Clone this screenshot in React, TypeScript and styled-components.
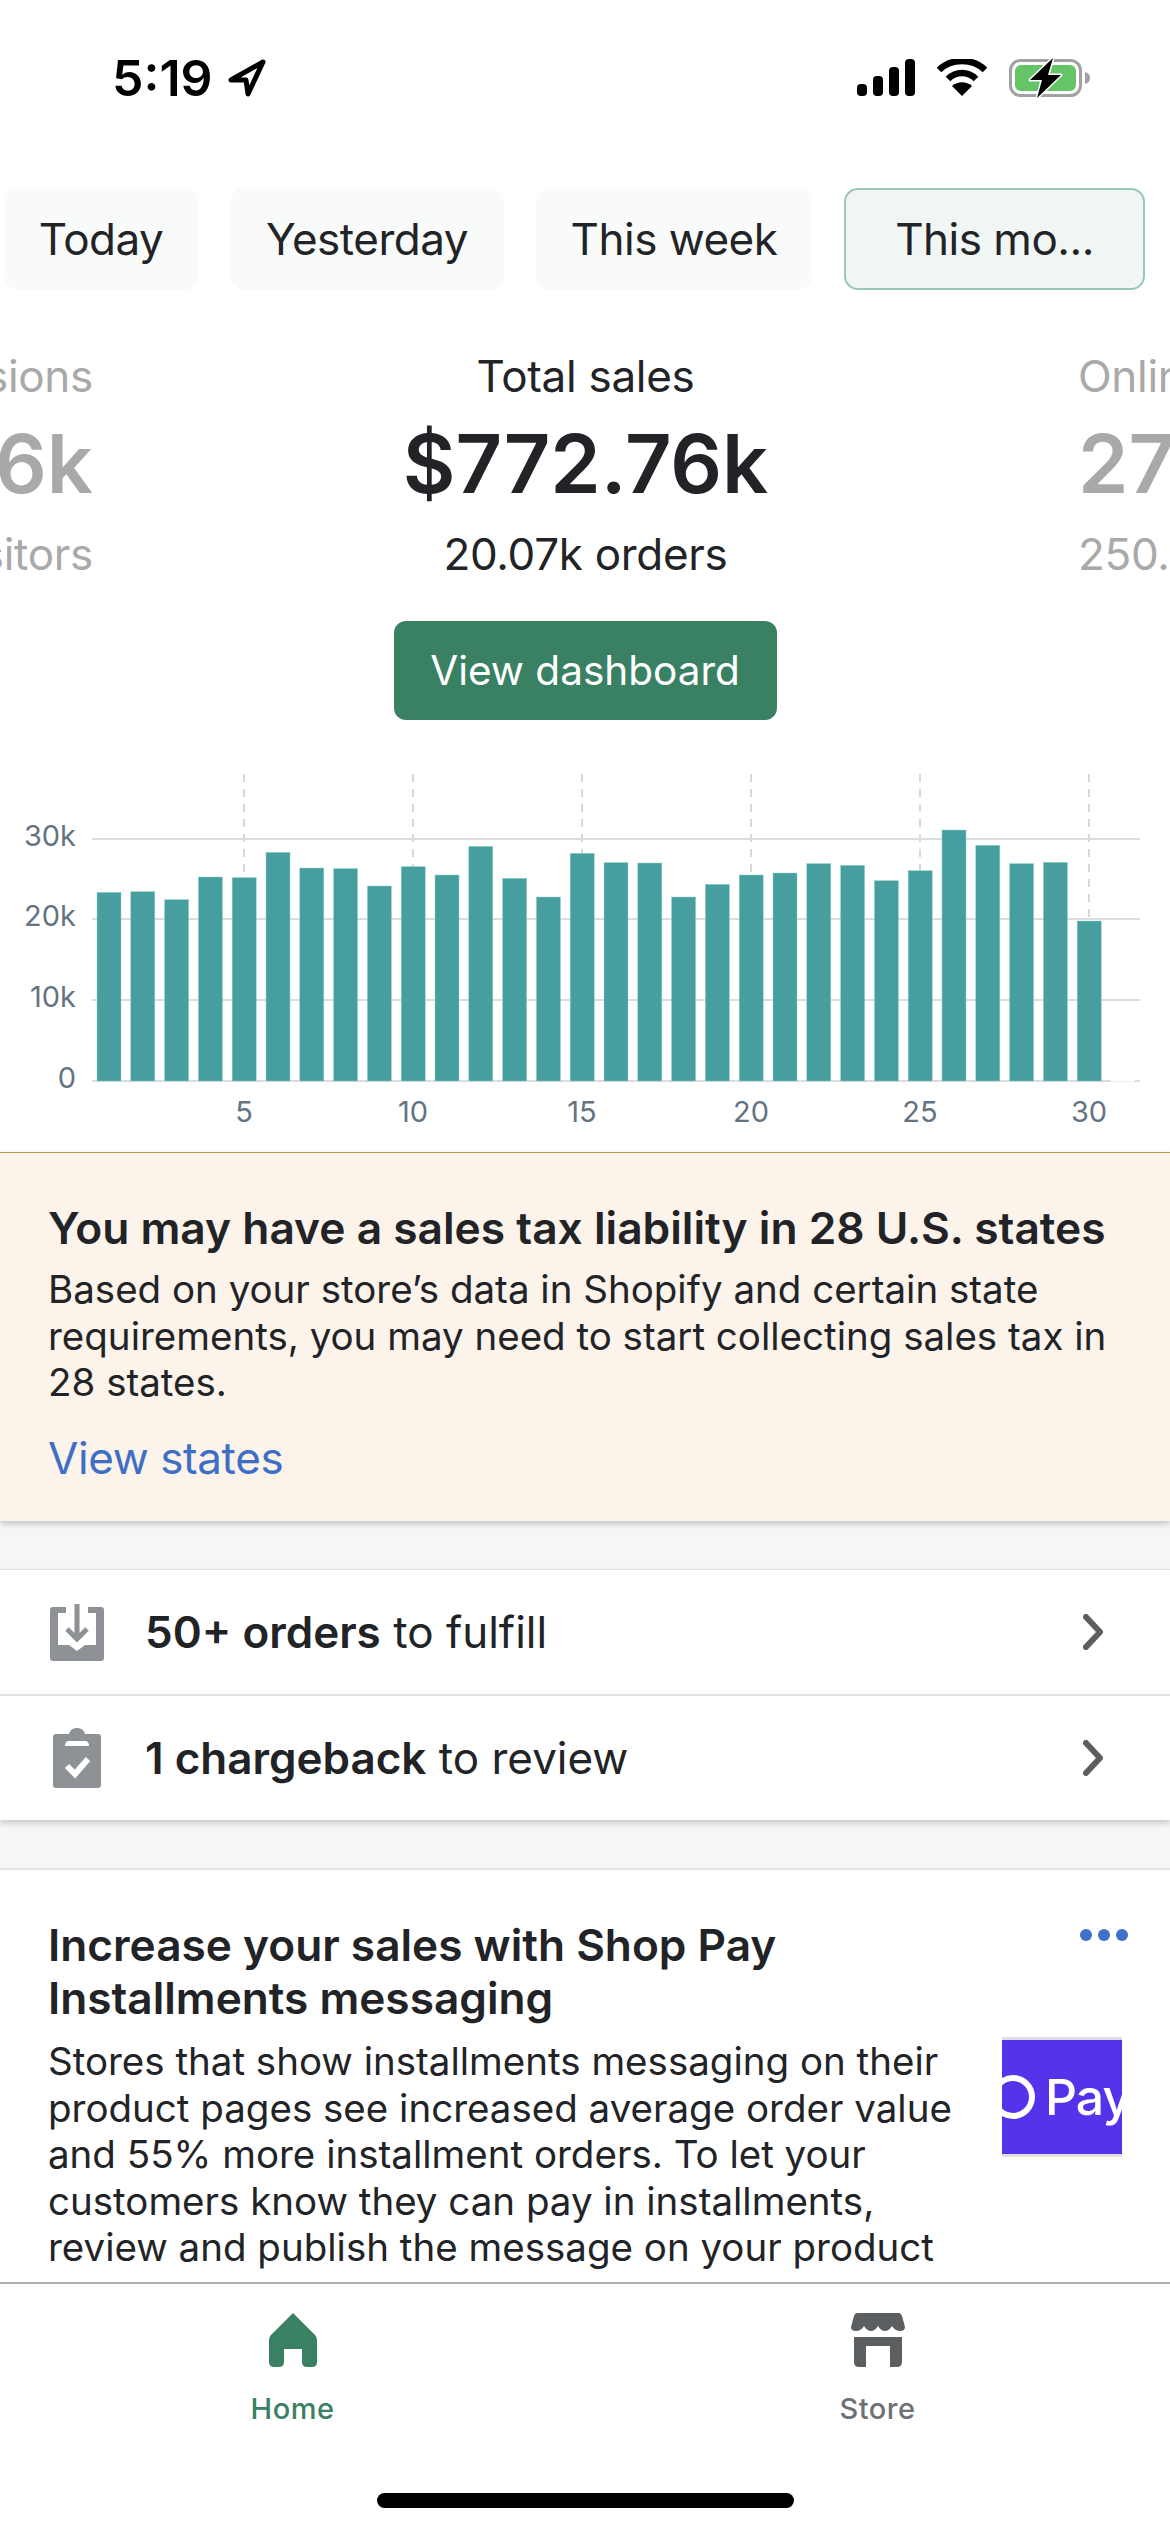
import styled, { createGlobalStyle } from "styled-components";

const GlobalStyle = createGlobalStyle`
	html, body {
		margin: 0;
		padding: 0;
		background: #fff;
	}
	body {
		font-family: Inter, "Liberation Sans", sans-serif;
		color: #212326;
	}
`;

const barTops = [
	427, 425, 449, 381, 383, 307, 354, 356, 408, 350, 375, 289, 385, 441, 310, 338, 339, 441, 403, 375, 369, 341, 346,
	392, 362, 240, 286, 341, 337, 513,
];

const App = () => {
	return (
		<Screen>
			<GlobalStyle />
			<StatusBar>
				<Clock>
					5:19
					<svg width="38" height="38" viewBox="0 0 38 38">
						<path d="M35 3 L3 21 L18 21 L20 35 Z" fill="none" stroke="#000" strokeWidth="5" strokeLinejoin="round" />
					</svg>
				</Clock>
				<StatusIcons>
					<svg width="58" height="38" viewBox="0 0 58 38">
						<rect x="0" y="25" width="10" height="12" rx="4" />
						<rect x="16" y="17" width="10" height="20" rx="4" />
						<rect x="32" y="8" width="10" height="29" rx="4" />
						<rect x="48" y="0" width="10" height="37" rx="4" />
					</svg>
					<svg width="50" height="38" viewBox="0 0 50 38">
						<path d="M2 11 C14 -1 36 -1 48 11" fill="none" stroke="#000" strokeWidth="6.5" />
						<path d="M11 20 C19 12 31 12 39 20" fill="none" stroke="#000" strokeWidth="6.5" />
						<path d="M25 37 L15 27 C21 22 29 22 35 27 Z" />
					</svg>
					<svg width="82" height="40" viewBox="0 0 82 40">
						<rect x="1.5" y="2.5" width="70" height="35" rx="10" fill="none" stroke="#a2a2a2" strokeWidth="3" />
						<rect x="6" y="7" width="61" height="26" rx="6" fill="#65c466" />
						<path d="M76 14 C80 15 81 18 81 20 C81 22 80 25 76 26 Z" fill="#a2a2a2" />
						<path
							d="M44 0 L21 22 L33 22 L28 40 L52 17 L39 17 Z"
							fill="#000"
							stroke="#fff"
							strokeWidth="3"
							strokeLinejoin="round"
							paintOrder="stroke"
						/>
					</svg>
				</StatusIcons>
			</StatusBar>

			<Tabs>
				<Tab $width={194}>Today</Tab>
				<Tab $width={274}>Yesterday</Tab>
				<Tab $width={276}>This week</Tab>
				<Tab $width={301} $active>
					This mo...
				</Tab>
			</Tabs>

			<Stats>
				<SideStat $align="right">
					<StatLabel>Sessions</StatLabel>
					<StatValue>306k</StatValue>
					<StatLabel>visitors</StatLabel>
				</SideStat>
				<MainStat>
					<StatLabel>Total sales</StatLabel>
					<StatValue>$772.76k</StatValue>
					<StatLabel>20.07k orders</StatLabel>
				</MainStat>
				<SideStat $align="left">
					<StatLabel>Online</StatLabel>
					<StatValue>27.5k</StatValue>
					<StatLabel>250.6k</StatLabel>
				</SideStat>
			</Stats>

			<DashboardButton>View dashboard</DashboardButton>

			<ChartWrap>
				<svg width="1170" height="370" viewBox="0 770 1170 370">
					{[244, 413, 582, 751, 920, 1089].map((x) => (
						<line key={x} x1={x} x2={x} y1="774" y2="1081" stroke="#d8d8da" strokeWidth="2" strokeDasharray="8 7" />
					))}
					{[839, 919, 1000].map((y) => (
						<line key={y} x1="92" x2="1140" y1={y} y2={y} stroke="#dcdcdf" strokeWidth="2" />
					))}
					<line x1="92" x2="1111" y1="1081" y2="1081" stroke="#dcdcdf" strokeWidth="2" />
					<line x1="1111" x2="1135" y1="1081.5" y2="1081.5" stroke="#eeeef0" strokeWidth="1" />
					<line x1="1135" x2="1140" y1="1081" y2="1081" stroke="#dcdcdf" strokeWidth="2" />
					{barTops.map((top, i) => {
						const y = 750 + top / 3;
						return (
							<rect
								key={i}
								x={97 + i * 33.8}
								y={y}
								width="24"
								height={1081 - y}
								fill="#479e9e"
								stroke="#8fcfca"
								strokeWidth="0.5"
							/>
						);
					})}
					<g fill="#637381" fontFamily="Inter, sans-serif" fontSize="29">
						{[
							["30k", 846],
							["20k", 926],
							["10k", 1007],
							["0", 1088],
						].map(([label, y]) => (
							<text key={label} x="76" y={y} textAnchor="end">
								{label}
							</text>
						))}
						{[5, 10, 15, 20, 25, 30].map((n, i) => (
							<text key={n} x={244 + i * 169} y="1122" textAnchor="middle">
								{n}
							</text>
						))}
					</g>
				</svg>
			</ChartWrap>

			<Banner>
				<BannerTitle>You may have a sales tax liability in 28 U.S. states</BannerTitle>
				<BodyText>
					Based on your store’s data in Shopify and certain state requirements, you may need to start collecting sales
					tax in 28 states.
				</BodyText>
				<BannerLink>View states</BannerLink>
			</Banner>

			<Gap />

			<TaskList>
				<TaskRow>
					<TaskIcon>
						<svg width="54" height="58" viewBox="0 0 54 58">
							<path
								d="M3 4 H16 V10 H8 V42 H19 L27 48 L35 42 H46 V10 H38 V4 H51 A3 3 0 0 1 54 7 V55 A3 3 0 0 1 51 58 H3 A3 3 0 0 1 0 55 V7 A3 3 0 0 1 3 4 Z"
								fill="#8e9196"
							/>
							<path d="M27 1 V36 M17 26 L27 36 L37 26" fill="none" stroke="#8e9196" strokeWidth="5" />
						</svg>
					</TaskIcon>
					<TaskText>
						<strong>50+ orders</strong> to fulfill
					</TaskText>
					<Chevron />
				</TaskRow>
				<TaskRow>
					<TaskIcon>
						<svg width="48" height="60" viewBox="0 0 48 60">
							<path
								d="M3 6 H16 C17 2 20 0 24 0 C28 0 31 2 32 6 H45 A3 3 0 0 1 48 9 V57 A3 3 0 0 1 45 60 H3 A3 3 0 0 1 0 57 V9 A3 3 0 0 1 3 6 Z"
								fill="#8e9196"
							/>
							<path d="M12 18 C12 14 14 13 16 13 H32 C34 13 36 14 36 18 Z" fill="#fff" />
							<path d="M14 38 L22 46 L35 31" fill="none" stroke="#fff" strokeWidth="6" />
						</svg>
					</TaskIcon>
					<TaskText>
						<strong>1 chargeback</strong> to review
					</TaskText>
					<Chevron />
				</TaskRow>
			</TaskList>

			<Gap />

			<Card>
				<CardHeader>
					<CardTitle>Increase your sales with Shop Pay Installments messaging</CardTitle>
					<MoreDots>
						<span />
						<span />
						<span />
					</MoreDots>
				</CardHeader>
				<CardBody>
					<BodyText>
						Stores that show installments messaging on their product pages see increased average order value and 55%
						more installment orders. To let your customers know they can pay in installments, review and publish the
						message on your product
					</BodyText>
					<ShopPayThumb>
						<svg width="43" height="60" viewBox="0 0 43 60">
							<circle cx="11" cy="30" r="19" fill="none" stroke="#fff" strokeWidth="6" />
							<circle cx="2" cy="26" r="4" fill="#5433eb" />
						</svg>
						<ThumbWord>Pay</ThumbWord>
					</ShopPayThumb>
				</CardBody>
			</Card>

			<BottomNav>
				<NavItem $active>
					<svg width="48" height="54" viewBox="0 0 48 54">
						<path
							d="M24 0 L46 22 Q48 24 48 27 V49 Q48 54 43 54 H38 Q33 54 33 49 V36 H15 V49 Q15 54 10 54 H5 Q0 54 0 49 V27 Q0 24 2 22 Z"
							fill="#3a8063"
						/>
					</svg>
					Home
				</NavItem>
				<NavItem>
					<svg width="54" height="54" viewBox="0 0 54 54">
						<path
							d="M6 0 H48 Q50 0 51 3 L54 14 Q54 18 49 18 Q44 18 41 13 Q38 18 34 18 Q30 18 27 13 Q24 18 20 18 Q16 18 13 13 Q10 18 5 18 Q0 18 0 14 L3 3 Q4 0 6 0 Z"
							fill="#5c5f62"
						/>
						<path d="M3 24 H51 V49 Q51 54 46 54 H39 V33 H15 V54 H8 Q3 54 3 49 Z" fill="#5c5f62" />
					</svg>
					Store
				</NavItem>
			</BottomNav>
			<HomeIndicator />
		</Screen>
	);
};

const Chevron = () => (
	<ChevronBox>
		<svg width="20" height="36" viewBox="0 0 20 36">
			<path d="M3 3 L17 18 L3 33" fill="none" stroke="#5c5f62" strokeWidth="6" strokeLinecap="round" strokeLinejoin="round" />
		</svg>
	</ChevronBox>
);

const Screen = styled.div`
	width: 1170px;
	height: 2532px;
	overflow: hidden;
	display: flex;
	flex-direction: column;
	background: #fff;
	position: relative;
`;

const StatusBar = styled.div`
	height: 188px;
	flex: none;
	display: flex;
	justify-content: space-between;
	align-items: flex-start;
	padding: 58px 79px 0 112px;
	box-sizing: border-box;
`;

const Clock = styled.div`
	display: flex;
	align-items: center;
	gap: 15px;
	font-size: 50px;
	font-weight: 600;
	line-height: 40px;
	color: #000;
`;

const StatusIcons = styled.div`
	display: flex;
	align-items: center;
	gap: 22px;
`;

const Tabs = styled.div`
	display: flex;
	gap: 32px;
	padding-left: 4px;
	flex: none;
`;

const Tab = styled.div<{ $active?: boolean; $width: number }>`
	width: ${(p) => p.$width}px;
	height: 102px;
	box-sizing: border-box;
	display: flex;
	align-items: center;
	justify-content: center;
	font-size: 44px;
	letter-spacing: -0.5px;
	white-space: nowrap;
	color: #212326;
	border-radius: 14px;
	background: ${(p) => (p.$active ? "#f1f5f4" : "#f9fbfa")};
	border: ${(p) => (p.$active ? "2px solid #9ac8b2" : "none")};
	flex: none;
`;

const Stats = styled.div`
	display: grid;
	grid-template-columns: 93px 1fr 92px;
	margin-top: 60px;
	overflow: hidden;
	flex: none;
`;

const MainStat = styled.div`
	display: flex;
	flex-direction: column;
	align-items: center;
	color: #212326;
`;

const SideStat = styled.div<{ $align: "left" | "right" }>`
	display: flex;
	flex-direction: column;
	align-items: ${(p) => (p.$align === "right" ? "flex-end" : "flex-start")};
	color: #a9a9a9;
`;

const StatLabel = styled.div`
	font-size: 44px;
	line-height: 52px;
	letter-spacing: -0.3px;
	white-space: nowrap;
	flex: none;
`;

const StatValue = styled.div`
	font-size: 81px;
	font-weight: 600;
	line-height: 96px;
	margin: 14px 0 16px;
	white-space: nowrap;
	flex: none;
`;

const DashboardButton = styled.div`
	width: 383px;
	height: 99px;
	margin: 41px auto 0;
	flex: none;
	display: flex;
	align-items: center;
	justify-content: center;
	background: #3a8063;
	color: #fff;
	border-radius: 12px;
	font-size: 40.5px;
`;

const ChartWrap = styled.div`
	margin-top: 50px;
	height: 382px;
	flex: none;
`;

const Banner = styled.div`
	flex: none;
	height: 369px;
	box-sizing: border-box;
	padding: 49px 48px 0;
	background: #fcf3ea;
	border-top: 1px solid #b8974a;
	box-shadow: 0 3px 6px rgba(0, 0, 0, 0.2);
	position: relative;
`;

const BannerTitle = styled.div`
	font-size: 44.3px;
	font-weight: 600;
	line-height: 52px;
	margin-bottom: 12px;
	white-space: nowrap;
`;

const BodyText = styled.div`
	font-size: 38.5px;
	line-height: 46.5px;
	color: #212326;
`;

const BannerLink = styled.div`
	margin-top: 26px;
	font-size: 44px;
	line-height: 52px;
	letter-spacing: -0.4px;
	color: #3f6fc4;
`;

const Gap = styled.div`
	height: 48px;
	flex: none;
	background: #f6f6f7;
`;

const TaskList = styled.div`
	flex: none;
	border-top: 1px solid #e3e3e4;
	background: #fff;
	box-shadow: 0 3px 6px rgba(0, 0, 0, 0.2);
	position: relative;
`;

const TaskRow = styled.div`
	height: 124px;
	display: flex;
	align-items: center;
	padding: 0 67px 0 50px;
	& + & {
		border-top: 2px solid #e3e3e4;
	}
`;

const TaskIcon = styled.div`
	width: 54px;
	display: flex;
	justify-content: center;
	flex: none;
`;

const TaskText = styled.div`
	margin-left: 41px;
	flex: 1;
	font-size: 44px;
	color: #212326;
	strong {
		font-weight: 600;
	}
`;

const ChevronBox = styled.div`
	display: flex;
`;

const Card = styled.div`
	flex: 1;
	min-height: 0;
	overflow: hidden;
	border-top: 2px solid #e3e3e4;
	padding: 49px 48px 0;
	background: #fff;
`;

const CardHeader = styled.div`
	display: flex;
	justify-content: space-between;
	align-items: flex-start;
`;

const CardTitle = styled.div`
	width: 860px;
	font-size: 44.2px;
	font-weight: 600;
	line-height: 53px;
`;

const MoreDots = styled.div`
	display: flex;
	gap: 6px;
	margin: 10px -6px 0 0;
	span {
		width: 12px;
		height: 12px;
		border-radius: 50%;
		background: #4070c8;
	}
`;

const CardBody = styled.div`
	display: grid;
	grid-template-columns: 930px 120px;
	gap: 24px;
	margin-top: 13px;
`;

const ShopPayThumb = styled.div`
	width: 120px;
	height: 120px;
	margin-top: -1px;
	box-sizing: border-box;
	background: #5433eb;
	border-top: 3px solid #dcdfe4;
	border-bottom: 3px solid #dcdfe4;
	display: flex;
	align-items: center;
	overflow: hidden;
	color: #fff;
	svg {
		flex: none;
	}
`;

const ThumbWord = styled.span`
	font-size: 50px;
	font-weight: 500;
	letter-spacing: -1px;
	white-space: nowrap;
`;

const BottomNav = styled.div`
	flex: none;
	height: 250px;
	box-sizing: border-box;
	border-top: 2px solid #b0b0b0;
	background: #fff;
	display: grid;
	grid-template-columns: 1fr 1fr;
	padding-top: 29px;
`;

const NavItem = styled.div<{ $active?: boolean }>`
	display: flex;
	flex-direction: column;
	align-items: center;
	gap: 24px;
	height: 120px;
	font-size: 29px;
	font-weight: 500;
	letter-spacing: 0.5px;
	color: ${(p) => (p.$active ? "#3a8063" : "#6d7175")};
`;

const HomeIndicator = styled.div`
	position: absolute;
	left: 377px;
	top: 2493px;
	width: 417px;
	height: 15px;
	border-radius: 8px;
	background: #000;
`;

export default App;
